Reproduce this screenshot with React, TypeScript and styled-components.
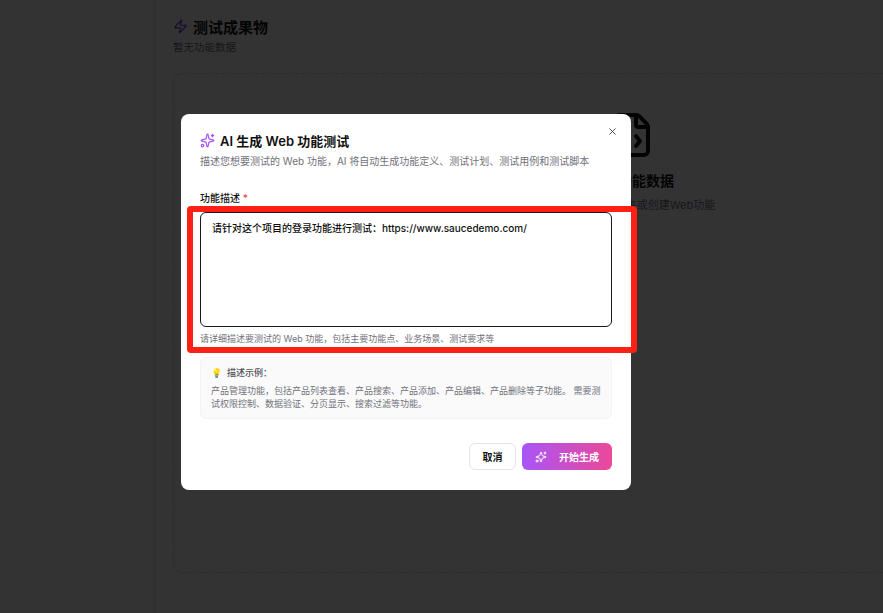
import { createGlobalStyle } from "styled-components";
import styled from "styled-components";
import { FileCode, Sparkles, X, Zap } from "lucide-react";

const GlobalStyle = createGlobalStyle`
  html, body {
    margin: 0;
    padding: 0;
    height: 100%;
    overflow: hidden;
    background: #ffffff;
    font-family: Inter, "Noto Sans CJK SC", sans-serif;
  }
  * {
    box-sizing: border-box;
  }
`;

const Page = styled.div`
  display: flex;
  width: 883px;
  height: 613px;
  overflow: hidden;
`;

const Sidebar = styled.aside`
  flex: 0 0 155px;
  border-right: 1px solid #e5e7eb;
`;

const Main = styled.main`
  flex: 0 0 954px;
  padding: 17px 18px 0;
`;

const TitleRow = styled.div`
  display: flex;
  align-items: center;
  gap: 5px;
  height: 18px;
`;

const PageTitle = styled.h1`
  margin: 0;
  font-size: 15px;
  font-weight: 600;
  color: #111;
`;

const PageSub = styled.p`
  margin: 5px 0 0;
  font-size: 10.5px;
  line-height: 15px;
  color: #6b7280;
`;

const EmptyCard = styled.section`
  margin-top: 18px;
  height: 500px;
  padding-top: 37px;
  display: flex;
  flex-direction: column;
  align-items: center;
  border: 1px dashed #d1d5db;
  border-radius: 8px;
`;

const EmptyTitle = styled.h2`
  margin: 12px 0 0;
  font-size: 14px;
  line-height: 20px;
  font-weight: 600;
  color: #111;
`;

const EmptyText = styled.p`
  margin: 6px 0 0;
  font-size: 11px;
  line-height: 16px;
  color: #6b7280;
`;

const Overlay = styled.div`
  position: fixed;
  inset: 0;
  padding: 114px 0 0 181px;
  background-color: rgba(0, 0, 0, 0.8);
`;

const Modal = styled.div`
  position: relative;
  width: 450px;
  height: 376px;
  padding: 17px 19px 0;
  background: #fff;
  border-radius: 8px;
`;

const CloseButton = styled.button`
  position: absolute;
  top: 12px;
  right: 13px;
  display: flex;
  padding: 0;
  border: 0;
  background: none;
  color: #444;
`;

const ModalTitleRow = styled.div`
  display: flex;
  align-items: center;
  gap: 5px;
  height: 18px;
`;

const ModalTitle = styled.h2`
  margin: 0;
  font-size: 13px;
  font-weight: 600;
  color: #111;
`;

const ModalSub = styled.p`
  margin: 5px 0 0;
  font-size: 10px;
  line-height: 14px;
  color: #71717a;
`;

const FieldLabel = styled.label`
  display: block;
  margin-top: 23px;
  font-size: 10px;
  line-height: 14px;
  font-weight: 500;
  color: #111;
`;

const Required = styled.span`
  color: #ef4444;
`;

const DescriptionBox = styled.div`
  margin-top: 7px;
  height: 115px;
  padding: 7px 11px;
  border: 1px solid #18181b;
  border-radius: 6px;
  font-size: 10px;
  line-height: 16px;
  font-weight: 500;
  color: #111;
`;

const Hint = styled.p`
  margin: 6px 0 0;
  font-size: 9px;
  line-height: 12px;
  color: #71717a;
`;

const ExampleCard = styled.div`
  margin-top: 12px;
  height: 62px;
  padding: 9px 10px;
  background: #fafafa;
  border: 1px solid #f4f4f5;
  border-radius: 6px;
`;

const ExampleHead = styled.div`
  display: flex;
  align-items: center;
  gap: 5px;
  font-size: 9px;
  line-height: 12px;
  font-weight: 500;
  color: #52525b;
`;

const ExampleBody = styled.p`
  margin: 6px 0 0;
  font-size: 9px;
  line-height: 12.5px;
  color: #71717a;
`;

const Footer = styled.div`
  display: flex;
  justify-content: flex-end;
  gap: 6px;
  margin-top: 24px;
`;

const CancelButton = styled.button`
  width: 47px;
  height: 27px;
  padding: 0;
  background: #fff;
  border: 1px solid #e4e4e7;
  border-radius: 6px;
  font: 600 10px Inter, "Noto Sans CJK SC", sans-serif;
  color: #111;
`;

const GenerateButton = styled.button`
  display: flex;
  align-items: center;
  justify-content: center;
  gap: 12px;
  width: 90px;
  height: 27px;
  padding: 0;
  border: 0;
  border-radius: 6px;
  background: linear-gradient(to right, #a855f7, #ec4899);
  font: 600 10px Inter, "Noto Sans CJK SC", sans-serif;
  color: #fff;
`;

const Annotation = styled.div`
  position: fixed;
  left: 187px;
  top: 206px;
  width: 450px;
  height: 147px;
  border: 6px solid #ff2015;
  border-radius: 4px;
  pointer-events: none;
`;

const App = () => {
  return (
    <>
      <GlobalStyle />
      <Page>
        <Sidebar />
        <Main>
          <TitleRow>
            <Zap size={15} color="#7c3aed" />
            <PageTitle>测试成果物</PageTitle>
          </TitleRow>
          <PageSub>暂无功能数据</PageSub>
          <EmptyCard>
            <FileCode size={48} color="#111" />
            <EmptyTitle>暂无功能数据</EmptyTitle>
            <EmptyText>请选择一个文件夹或创建Web功能</EmptyText>
          </EmptyCard>
        </Main>
      </Page>
      <Overlay>
        <Modal>
          <CloseButton>
            <X size={11} />
          </CloseButton>
          <ModalTitleRow>
            <Sparkles size={15} color="#a855f7" />
            <ModalTitle>AI 生成 Web 功能测试</ModalTitle>
          </ModalTitleRow>
          <ModalSub>描述您想要测试的 Web 功能，AI 将自动生成功能定义、测试计划、测试用例和测试脚本</ModalSub>
          <FieldLabel>
            功能描述 <Required>*</Required>
          </FieldLabel>
          <DescriptionBox>请针对这个项目的登录功能进行测试：https://www.saucedemo.com/</DescriptionBox>
          <Hint>请详细描述要测试的 Web 功能，包括主要功能点、业务场景、测试要求等</Hint>
          <ExampleCard>
            <ExampleHead>
              <span>💡</span>
              描述示例：
            </ExampleHead>
            <ExampleBody>
              产品管理功能，包括产品列表查看、产品搜索、产品添加、产品编辑、产品删除等子功能。 需要测试权限控制、数据验证、分页显示、搜索过滤等功能。
            </ExampleBody>
          </ExampleCard>
          <Footer>
            <CancelButton>取消</CancelButton>
            <GenerateButton>
              <Sparkles size={12} />
              开始生成
            </GenerateButton>
          </Footer>
        </Modal>
      </Overlay>
      <Annotation />
    </>
  );
};

export default App;
